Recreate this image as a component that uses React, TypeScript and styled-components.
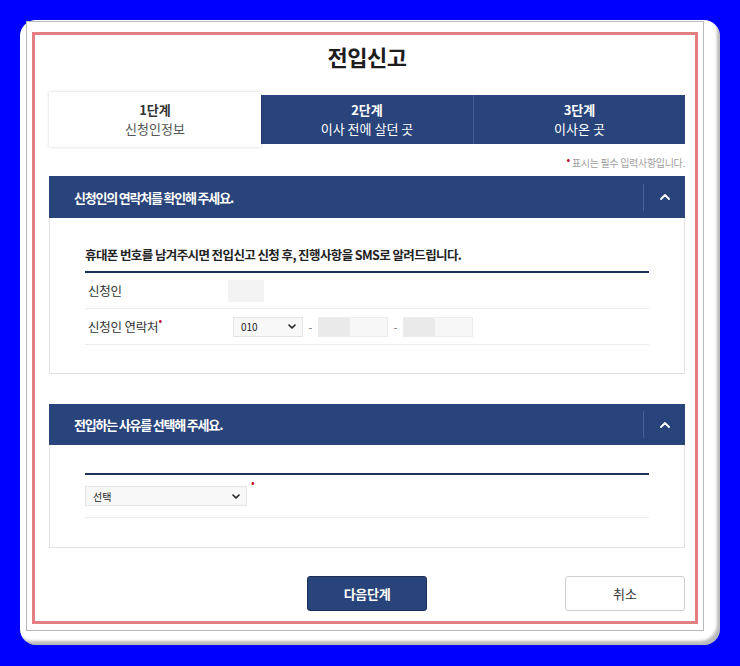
import React from "react";
import styled, { createGlobalStyle } from "styled-components";

const GlobalStyle = createGlobalStyle`
  html, body { margin: 0; padding: 0; background: #0000ff; }
  body { font-family: "Noto Sans CJK KR", "Noto Sans", sans-serif; }
  * { box-sizing: border-box; }
`;

const NAVY = "#29447a";

const Page = styled.div`
  width: 740px;
  height: 666px;
  padding: 20px 20px 21px 20px;
`;

const Outer = styled.div`
  width: 700px;
  height: 625px;
  background: #fff;
  border-radius: 16px;
  padding: 1px 16px 14px 6px;
  box-shadow: inset -4px -5px 3px -1px rgba(0, 0, 0, 0.28);
`;

const Sheet = styled.div`
  height: 100%;
  border: 1px solid #b9b9b9;
  background: #fff;
  padding: 10px 5px 5px 5px;
`;

const Frame = styled.div`
  height: 592px;
  border: 3px solid #e17f82;
  display: flex;
  flex-direction: column;
  padding: 0 10px 0 14px;
`;

const Title = styled.h1`
  margin: 0;
  height: 60px;
  padding-top: 9px;
  line-height: 24px;
  font-size: 22px;
  font-weight: 700;
  color: #1d1d1d;
  text-align: center;
  letter-spacing: -0.5px;
`;

const Tabs = styled.div`
  display: grid;
  grid-template-columns: repeat(3, 1fr);
  height: 49px;
  background: ${NAVY};
`;

const Tab = styled.div<{ $active?: boolean; $divider?: boolean }>`
  display: flex;
  flex-direction: column;
  align-items: center;
  justify-content: center;
  color: ${(p) => (p.$active ? "#333" : "#fff")};
  background: ${(p) => (p.$active ? "#fff" : "transparent")};
  margin: ${(p) => (p.$active ? "-3px 0" : "0")};
  box-shadow: ${(p) => (p.$active ? "0 0 3px rgba(0,0,0,0.18)" : "none")};
  border-left: ${(p) => (p.$divider ? "1px solid #3f5a8e" : "none")};
  position: relative;
  z-index: ${(p) => (p.$active ? 1 : 0)};
  padding-bottom: 1px;
`;

const TabStep = styled.span`
  display: block;
  line-height: 19px;
  font-weight: 700;
  font-size: 13px;
`;

const TabName = styled.span<{ $active?: boolean }>`
  display: block;
  line-height: 19px;
  color: ${(p) => (p.$active ? "#555" : "#fff")};
  font-size: 13px;
`;

const Note = styled.div`
  height: 32px;
  padding-top: 12px;
  display: flex;
  justify-content: flex-end;
  align-items: flex-start;
  line-height: 14px;
  font-size: 10px;
  color: #a0a0a0;
  letter-spacing: -0.3px;
`;

const Req = styled.span`
  color: #c8102e;
  font-size: 11px;
  line-height: 10px;
  margin-right: 2px;
  position: relative;
  top: -2px;
`;

const Section = styled.section<{ $gap?: number }>`
  margin-bottom: ${(p) => p.$gap ?? 0}px;
`;

const SectionHeader = styled.div<{ $h: number }>`
  height: ${(p) => p.$h}px;
  background: ${NAVY};
  display: flex;
  align-items: center;
  padding-left: 25px;
`;

const SectionTitle = styled.h2`
  flex: 1;
  margin: 0;
  font-size: 13px;
  font-weight: 700;
  color: #fff;
  letter-spacing: -1.2px;
`;

const Toggle = styled.div`
  width: 42px;
  height: 27px;
  border-left: 1px solid #47609a;
  display: flex;
  align-items: center;
  justify-content: center;
`;

const SectionBody = styled.div<{ $pt: number; $pb: number }>`
  border: 1px solid #e3e3e3;
  border-top: none;
  padding: ${(p) => p.$pt}px 35px ${(p) => p.$pb}px 35px;
`;

const Intro = styled.p`
  margin: 0;
  line-height: 20px;
  padding-bottom: 6px;
  font-size: 12.5px;
  font-weight: 700;
  color: #222;
  letter-spacing: -0.6px;
`;

const Table = styled.div`
  border-top: 2px solid #1f3158;
`;

const Row = styled.div<{ $h: number }>`
  display: grid;
  grid-template-columns: 143px 1fr;
  align-items: center;
  height: ${(p) => p.$h}px;
  border-bottom: 1px solid #ececec;
`;

const SingleRow = styled.div`
  display: flex;
  align-items: center;
  height: 43px;
  border-bottom: 1px solid #ececec;
`;

const Label = styled.div`
  display: flex;
  align-items: flex-start;
  padding-left: 3px;
  font-size: 12.5px;
  color: #333;
  letter-spacing: -0.2px;
`;

const Value = styled.div<{ $pl?: number }>`
  display: flex;
  align-items: center;
  padding-left: ${(p) => p.$pl ?? 0}px;
`;

const Masked = styled.div`
  width: 36px;
  height: 22px;
  background: #f3f3f3;
`;

const SelectBox = styled.div<{ $w: number }>`
  width: ${(p) => p.$w}px;
  height: 20px;
  background: #f8f8f8;
  border: 1px solid #e4e4e4;
  display: flex;
  align-items: center;
  justify-content: space-between;
  padding: 0 6px 0 7px;
  font-size: 10px;
  color: #222;
`;

const Dash = styled.span`
  width: 15px;
  text-align: center;
  font-size: 10px;
  color: #555;
`;

const Input = styled.div`
  width: 70px;
  height: 20px;
  border: 1px solid #ececec;
  background: linear-gradient(to right, #eaeaea 0 31px, #f7f7f7 31px);
`;

const ReasonReq = styled(Req)`
  align-self: flex-start;
  margin: 4px 0 0 4px;
`;

const Buttons = styled.div`
  display: grid;
  grid-template-columns: 1fr auto 1fr;
  margin-top: auto;
  margin-bottom: 10px;
`;

const PrimaryButton = styled.button`
  grid-column: 2;
  width: 120px;
  height: 35px;
  background: ${NAVY};
  border: 1px solid #1c2f57;
  border-radius: 3px;
  color: #fff;
  font-family: inherit;
  font-size: 13px;
  font-weight: 700;
  letter-spacing: -0.3px;
`;

const GhostButton = styled.button`
  grid-column: 3;
  justify-self: end;
  width: 120px;
  height: 35px;
  background: #fff;
  border: 1px solid #cfcfcf;
  border-radius: 3px;
  color: #333;
  font-family: inherit;
  font-size: 13px;
`;

const Chevron = ({ size = 10 }: { size?: number }) => (
  <svg width={size} height={size * 0.6} viewBox="0 0 10 6" fill="none">
    <path d="M1 5 L5 1 L9 5" stroke="#fff" strokeWidth="1.8" strokeLinecap="round" strokeLinejoin="round" />
  </svg>
);

const Down = () => (
  <svg width="8" height="5" viewBox="0 0 8 5" fill="none">
    <path d="M1 1 L4 4 L7 1" stroke="#222" strokeWidth="1.6" strokeLinecap="round" strokeLinejoin="round" />
  </svg>
);

export default function App() {
  return (
    <>
      <GlobalStyle />
      <Page>
        <Outer>
          <Sheet>
            <Frame>
              <Title>전입신고</Title>
              <Tabs>
                <Tab $active>
                  <TabStep>1단계</TabStep>
                  <TabName $active>신청인정보</TabName>
                </Tab>
                <Tab>
                  <TabStep>2단계</TabStep>
                  <TabName>이사 전에 살던 곳</TabName>
                </Tab>
                <Tab $divider>
                  <TabStep>3단계</TabStep>
                  <TabName>이사온 곳</TabName>
                </Tab>
              </Tabs>
              <Note>
                <Req>•</Req>
                <span>표시는 필수 입력사항입니다.</span>
              </Note>

              <Section $gap={30}>
                <SectionHeader $h={42}>
                  <SectionTitle>신청인의 연락처를 확인해 주세요.</SectionTitle>
                  <Toggle>
                    <Chevron />
                  </Toggle>
                </SectionHeader>
                <SectionBody $pt={27} $pb={28}>
                  <Intro>휴대폰 번호를 남겨주시면 전입신고 신청 후, 진행사항을 SMS로 알려드립니다.</Intro>
                  <Table>
                    <Row $h={36}>
                      <Label>신청인</Label>
                      <Value>
                        <Masked />
                      </Value>
                    </Row>
                    <Row $h={36}>
                      <Label>
                        <span>신청인 연락처</span>
                        <Req>•</Req>
                      </Label>
                      <Value $pl={5}>
                        <SelectBox $w={70}>
                          <span>010</span>
                          <Down />
                        </SelectBox>
                        <Dash>-</Dash>
                        <Input />
                        <Dash>-</Dash>
                        <Input />
                      </Value>
                    </Row>
                  </Table>
                </SectionBody>
              </Section>

              <Section>
                <SectionHeader $h={41}>
                  <SectionTitle>전입하는 사유를 선택해 주세요.</SectionTitle>
                  <Toggle>
                    <Chevron />
                  </Toggle>
                </SectionHeader>
                <SectionBody $pt={28} $pb={29}>
                  <Table>
                    <SingleRow>
                      <SelectBox $w={162}>
                        <span>선택</span>
                        <Down />
                      </SelectBox>
                      <ReasonReq>•</ReasonReq>
                    </SingleRow>
                  </Table>
                </SectionBody>
              </Section>

              <Buttons>
                <PrimaryButton>다음단계</PrimaryButton>
                <GhostButton>취소</GhostButton>
              </Buttons>
            </Frame>
          </Sheet>
        </Outer>
      </Page>
    </>
  );
}
